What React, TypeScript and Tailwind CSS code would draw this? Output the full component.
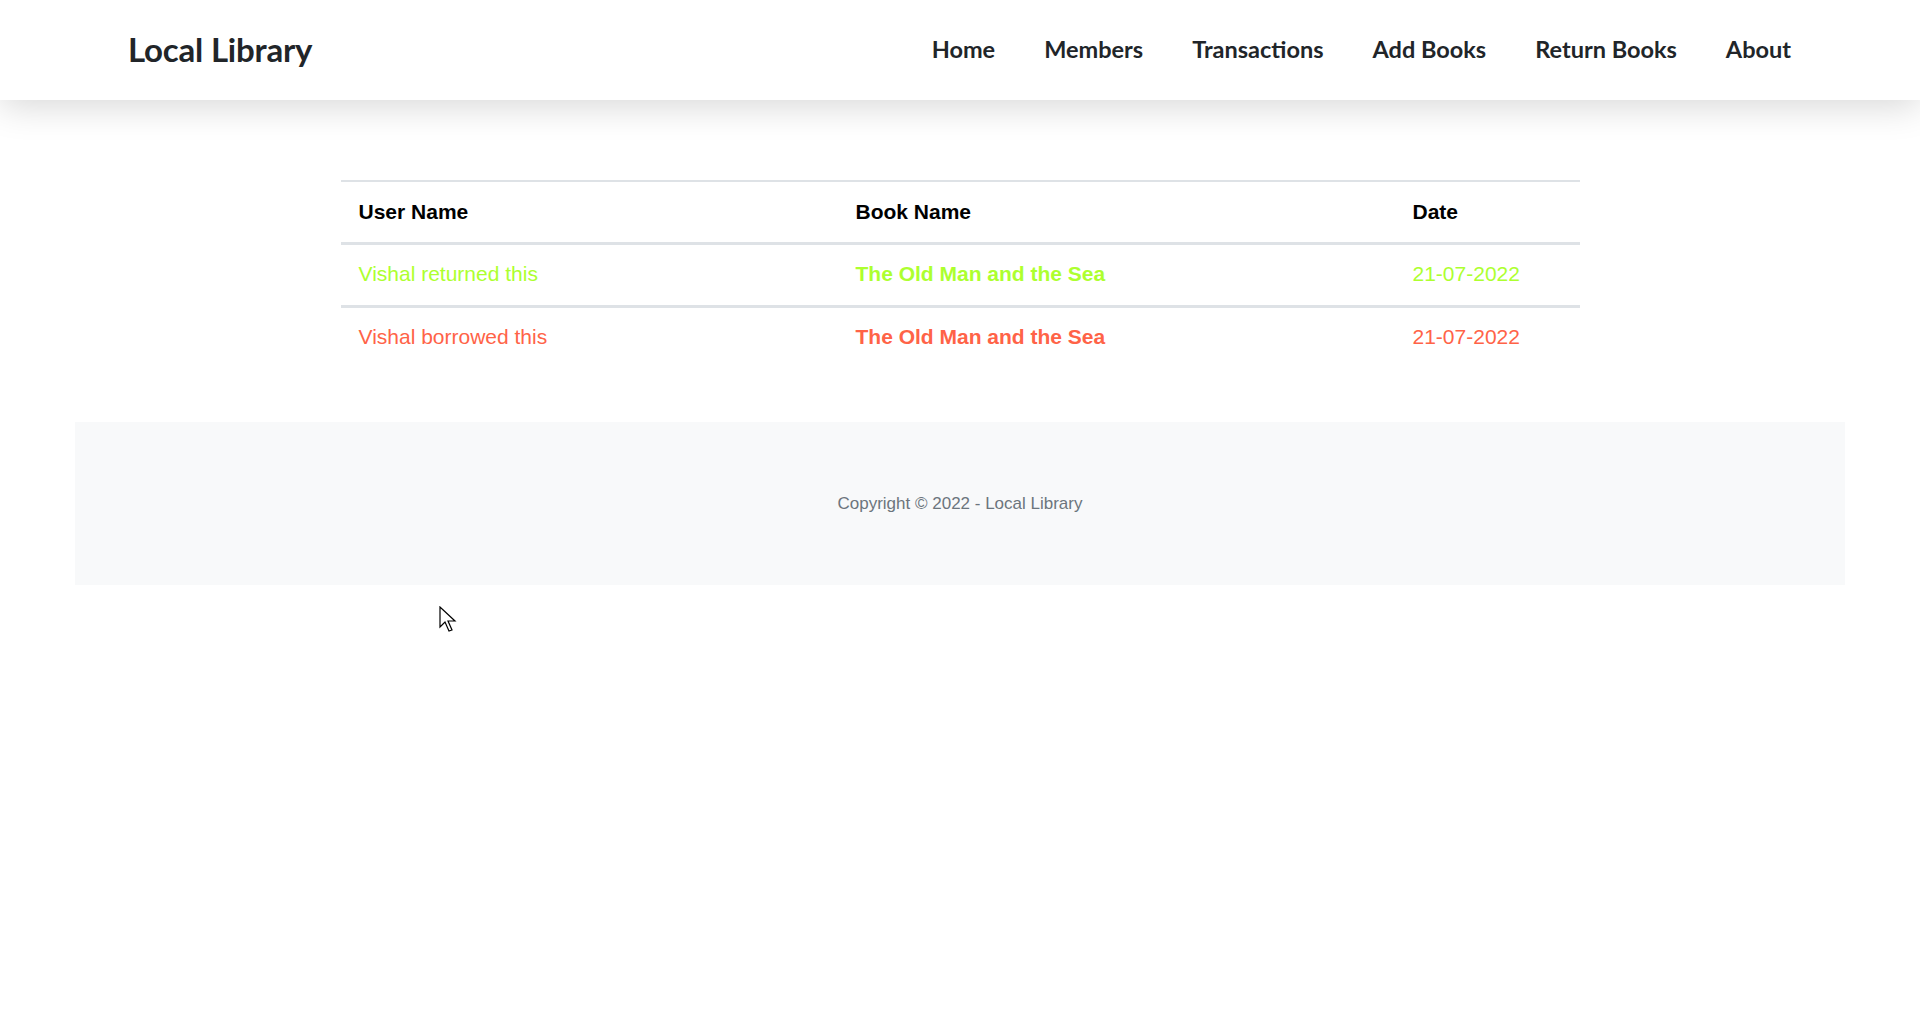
import React from "react";

const navLinks = ["Home", "Members", "Transactions", "Add Books", "Return Books", "About"];

const transactions = [
  { user: "Vishal returned this", book: "The Old Man and the Sea", date: "21-07-2022", returned: true },
  { user: "Vishal borrowed this", book: "The Old Man and the Sea", date: "21-07-2022", returned: false },
];

export default function App() {
  return (
    <div className="relative min-h-[1020px] bg-white font-['Liberation_Sans',Arial,sans-serif]">
      {/* Navbar */}
      <header className="relative z-10 h-[100px] bg-white shadow-[0_6px_36px_rgba(0,0,0,0.16)]">
        <div className="flex h-full items-center justify-between pl-[128px] pr-[129px] font-['Lato',sans-serif] text-[#212529]">
          <a href="#" className="text-[33px] font-bold tracking-[-0.2px]">
            Local Library
          </a>
          <nav className="flex items-center gap-[49px]">
            {navLinks.map((link) => (
              <a key={link} href="#" className="text-[23.5px] font-bold">
                {link}
              </a>
            ))}
          </nav>
        </div>
      </header>

      {/* Transactions */}
      <main className="mx-auto mt-[80px] w-[1239px]">
        <table className="w-full table-fixed border-collapse text-[21px] leading-[29px]">
          <thead>
            <tr className="border-t-2 border-b-[3px] border-[#dee2e6] text-black">
              <th className="w-[497px] px-[18px] pt-[15px] pb-[16px] text-left font-bold">User Name</th>
              <th className="w-[557px] px-[18px] pt-[15px] pb-[16px] text-left font-bold">Book Name</th>
              <th className="px-[18px] pt-[15px] pb-[16px] text-left font-bold">Date</th>
            </tr>
          </thead>
          <tbody>
            {transactions.map((t, i) => (
              <tr
                key={i}
                className={`${i > 0 ? "border-t-[3px] border-[#dee2e6]" : ""} ${t.returned ? "text-[#adff2f]" : "text-[#ff6347]"}`}
              >
                <td className="px-[18px] pt-[14px] pb-[17px]">{t.user}</td>
                <td className="px-[18px] pt-[14px] pb-[17px] font-bold">{t.book}</td>
                <td className="px-[18px] pt-[14px] pb-[17px]">{t.date}</td>
              </tr>
            ))}
          </tbody>
        </table>
      </main>

      {/* Footer */}
      <footer className="mx-[75px] mt-[54px] flex h-[163px] items-center justify-center bg-[#f8f9fa]">
        <p className="text-[17px] text-[#6c757d]">Copyright © 2022 - Local Library</p>
      </footer>

      {/* mouse pointer */}
      <svg className="absolute left-[439px] top-[606px]" width="20" height="28" viewBox="0 0 20 28">
        <path d="M1 1 L1 21 L6 16 L10 25 L13 24 L9 15 L16 15 Z" fill="white" stroke="black" strokeWidth="1.2" strokeLinejoin="miter" />
      </svg>
    </div>
  );
}
